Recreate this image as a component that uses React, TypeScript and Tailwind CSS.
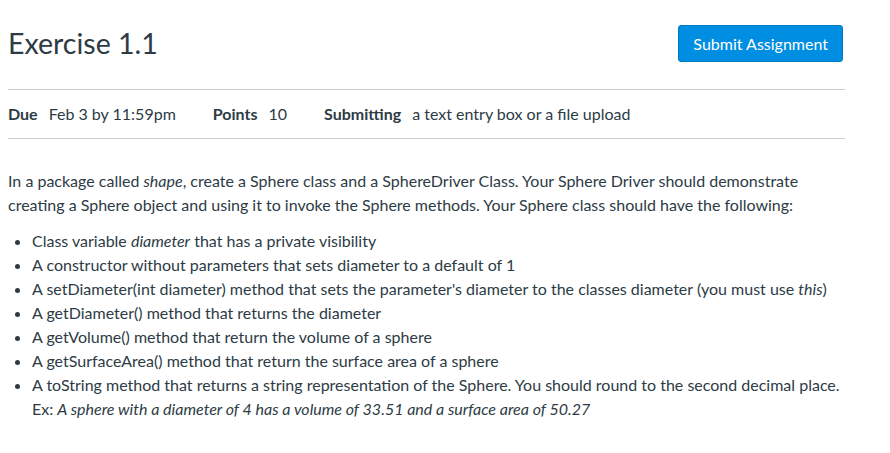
import React from 'react';

const requirements: React.ReactNode[] = [
  <>Class variable <em>diameter</em> that has a private visibility</>,
  <>A constructor without parameters that sets diameter to a default of 1</>,
  <>A setDiameter(int diameter) method that sets the parameter's diameter to the classes diameter (you must use <em>this</em>)</>,
  <>A getDiameter() method that returns the diameter</>,
  <>A getVolume() method that return the volume of a sphere</>,
  <>A getSurfaceArea() method that return the surface area of a sphere</>,
  <>
    A toString method that returns a string representation of the Sphere. You should round to the second decimal place.
    <br />
    Ex: <em>A sphere with a diameter of 4 has a volume of 33.51 and a surface area of 50.27</em>
  </>
];

const App = () => {
  return <div className="min-h-screen bg-white text-[#2D3B45]" style={{ fontFamily: 'Lato, "Noto Sans", sans-serif' }}>
      <div className="w-[837px] ml-2">
        {/* Header */}
        <div className="flex items-start justify-between pt-[25px]">
          <h1 className="text-[28.5px] leading-[36px] font-normal">Exercise 1.1</h1>
          <button className="mr-[2px] h-[37px] px-[14px] rounded-[3px] bg-[#008EE2] border border-[#0079c4] text-white text-[16px]">
            Submit Assignment
          </button>
        </div>

        {/* Details */}
        <div className="mt-[27px] border-t border-b border-[#C7CDD1] h-[50px] flex items-center gap-[37px] text-[16px]">
          <div className="flex gap-[11px]">
            <span className="font-bold">Due</span>
            <span>Feb 3 by 11:59pm</span>
          </div>
          <div className="flex gap-[11px]">
            <span className="font-bold">Points</span>
            <span>10</span>
          </div>
          <div className="flex gap-[11px]">
            <span className="font-bold">Submitting</span>
            <span>a text entry box or a file upload</span>
          </div>
        </div>

        {/* Description */}
        <div className="mt-[30px] text-[16px] leading-[24px]">
          <p className="max-w-[810px]">
            In a package called <em>shape</em>, create a Sphere class and a SphereDriver Class. Your Sphere Driver should demonstrate creating a Sphere object and using it to invoke the Sphere methods. Your Sphere class should have the following:
          </p>
          <ul className="list-disc pl-[24px] mt-[12px]">
            {requirements.map((item, i) => <li key={i}>{item}</li>)}
          </ul>
        </div>
      </div>
    </div>;
};

export default App;
